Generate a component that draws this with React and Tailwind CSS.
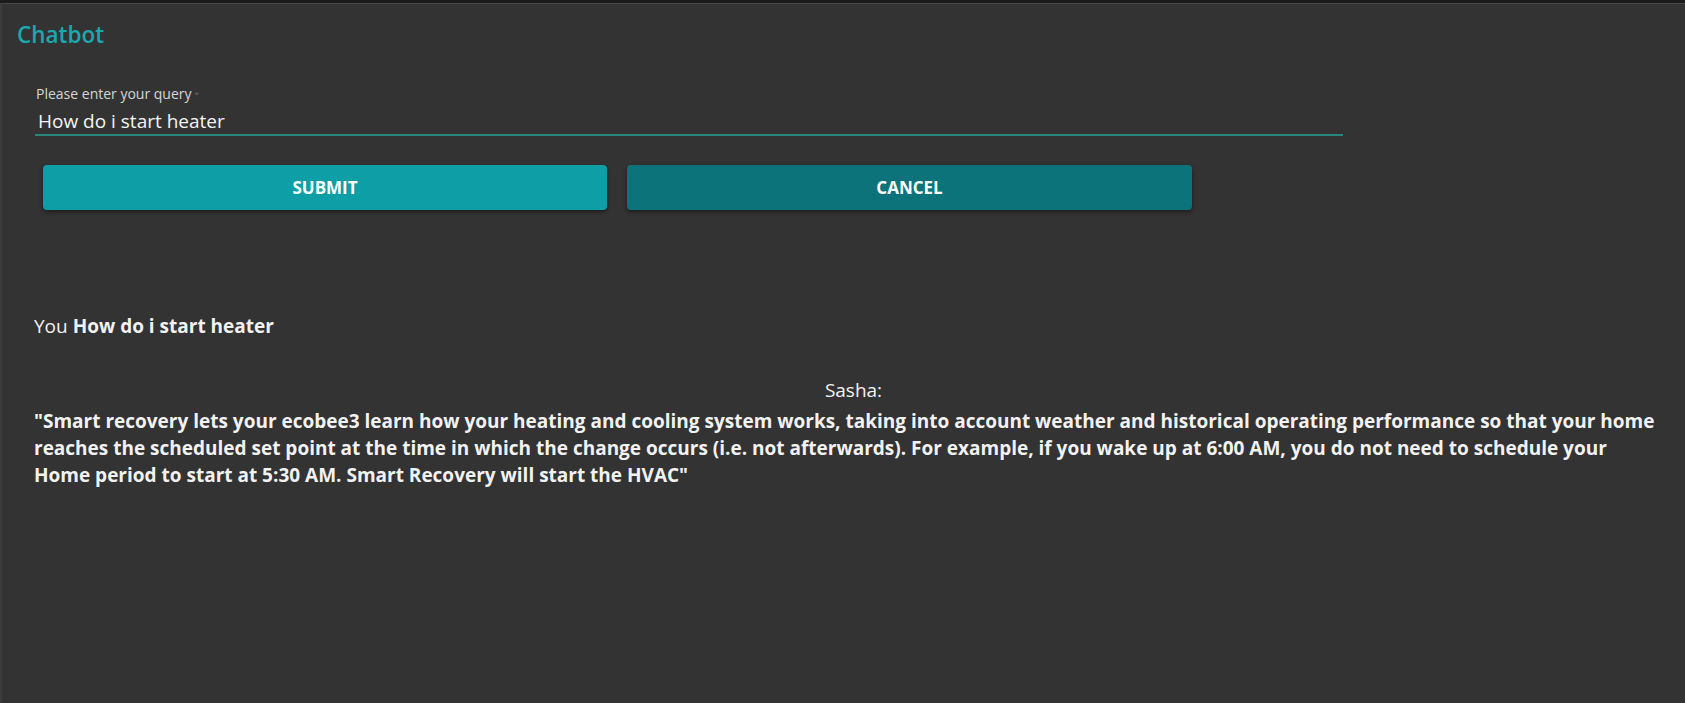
import { useState } from "react";

const answer =
  '"Smart recovery lets your ecobee3 learn how your heating and cooling system works, taking into account weather and historical operating performance so that your home reaches the scheduled set point at the time in which the change occurs (i.e. not afterwards). For example, if you wake up at 6:00 AM, you do not need to schedule your\nHome period to start at 5:30 AM. Smart Recovery will start the HVAC"';

export default function App() {
  const [query, setQuery] = useState("How do i start heater");

  return (
    <div className="min-h-screen bg-[#333333] border-t-[3px] border-[#1b1b1b] font-['Open_Sans',sans-serif] text-[#f2f2f2]">
      <div className="min-h-[700px] border-t border-l-2 border-t-[#474747] border-l-[#3c3c3c]">
        {/* Header */}
        <h1 className="pl-[15px] pt-[15px] text-[22.5px] leading-[32px] font-semibold text-[#1ba8ad]">
          Chatbot
        </h1>

        {/* Query form */}
        <div className="pl-[33px] mt-[34px]">
          <div className="w-[1308px] border-b-2 border-[#27877d]">
            <label className="block pl-[1px] text-[14px] leading-[18px] text-[#d6d6d6]">
              Please enter your query
              <span className="ml-[3px] align-top text-[8px] text-[#6a6a6a]">*</span>
            </label>
            <input
              value={query}
              onChange={(e) => setQuery(e.target.value)}
              className="mt-[6px] mb-[1px] block w-full bg-transparent pl-[3px] text-[19px] leading-[24px] text-[#f5f5f5] outline-none"
            />
          </div>
        </div>

        <div className="flex gap-5 pl-[41px] mt-[29px]">
          <button className="w-[564px] h-[45px] rounded bg-[#0e9fa6] text-[17px] font-bold text-white shadow-[0_2px_4px_rgba(0,0,0,0.45)]">
            SUBMIT
          </button>
          <button className="w-[565px] h-[45px] rounded bg-[#0b7379] text-[17px] font-bold text-white shadow-[0_2px_4px_rgba(0,0,0,0.45)]">
            CANCEL
          </button>
        </div>

        {/* Conversation */}
        <div className="pl-[32px] pr-[12px] mt-[103px] text-[19px] leading-[27px]">
          <p>
            You <b>{query}</b>
          </p>
          <p className="mt-[37px] text-center">Sasha:</p>
          <p className="mt-[4px] font-bold whitespace-pre-line">{answer}</p>
        </div>
      </div>
    </div>
  );
}
